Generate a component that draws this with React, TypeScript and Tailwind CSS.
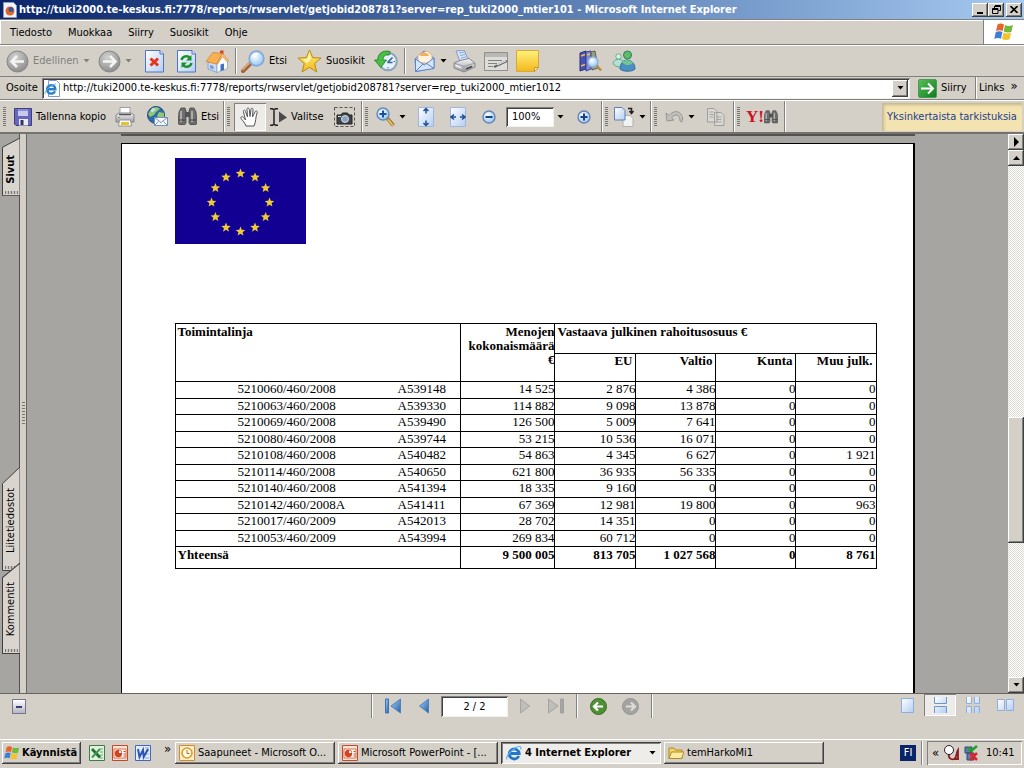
import { useState } from "react";
import type { ReactNode } from "react";

const RAISED = "bg-[#d4d0c8] shadow-[inset_-1px_-1px_#404040,inset_1px_1px_#fff,inset_-2px_-2px_#808080]";
const SUNKEN = "bg-white shadow-[inset_1px_1px_#808080,inset_-1px_-1px_#f4f2ee,inset_2px_2px_#404040]";

const MENU = ["Tiedosto", "Muokkaa", "Siirry", "Suosikit", "Ohje"];

const ROWS = [
  ["5210060/460/2008", "A539148", "14 525", "2 876", "4 386", "0", "0"],
  ["5210063/460/2008", "A539330", "114 882", "9 098", "13 878", "0", "0"],
  ["5210069/460/2008", "A539490", "126 500", "5 009", "7 641", "0", "0"],
  ["5210080/460/2008", "A539744", "53 215", "10 536", "16 071", "0", "0"],
  ["5210108/460/2008", "A540482", "54 863", "4 345", "6 627", "0", "1 921"],
  ["5210114/460/2008", "A540650", "621 800", "36 935", "56 335", "0", "0"],
  ["5210140/460/2008", "A541394", "18 335", "9 160", "0", "0", "0"],
  ["5210142/460/2008A", "A541411", "67 369", "12 981", "19 800", "0", "963"],
  ["5210017/460/2009", "A542013", "28 702", "14 351", "0", "0", "0"],
  ["5210053/460/2009", "A543994", "269 834", "60 712", "0", "0", "0"],
];
const TOTALS = ["9 500 005", "813 705", "1 027 568", "0", "8 761"];

function Svg({ w, h, children }: { w: number; h: number; children: ReactNode }) {
  return (
    <svg width={w} height={h} viewBox={`0 0 ${w} ${h}`} fill="none" className="block shrink-0" aria-hidden="true">
      {children}
    </svg>
  );
}

// Gradients shared by all icons
function Defs() {
  return (
    <svg className="absolute h-0 w-0" aria-hidden="true">
      <defs>
        <radialGradient id="grey" cx="0.4" cy="0.3" r="0.8">
          <stop offset="0" stopColor="#d2d2d0" />
          <stop offset="1" stopColor="#858585" />
        </radialGradient>
        <linearGradient id="sheet" x1="0" y1="0" x2="1" y2="1">
          <stop offset="0" stopColor="#ffffff" />
          <stop offset="1" stopColor="#b4cdf3" />
        </linearGradient>
        <radialGradient id="lens" cx="0.4" cy="0.35" r="0.7">
          <stop offset="0" stopColor="#ffffff" />
          <stop offset="1" stopColor="#8fc3f2" />
        </radialGradient>
        <linearGradient id="gold" x1="0" y1="0" x2="0" y2="1">
          <stop offset="0" stopColor="#fff27a" />
          <stop offset="1" stopColor="#f2b81c" />
        </linearGradient>
        <linearGradient id="nav" x1="0" y1="0" x2="1" y2="1">
          <stop offset="0" stopColor="#a9d2f5" />
          <stop offset="1" stopColor="#235fa8" />
        </linearGradient>
        <linearGradient id="green" x1="0" y1="0" x2="1" y2="1">
          <stop offset="0" stopColor="#58c258" />
          <stop offset="1" stopColor="#0d7a1c" />
        </linearGradient>
        <linearGradient id="metal" x1="0" y1="0" x2="0" y2="1">
          <stop offset="0" stopColor="#f8f8f8" />
          <stop offset="1" stopColor="#9b9ba3" />
        </linearGradient>
      </defs>
    </svg>
  );
}

const RoundArrow = ({ forward = false }) => (
  <Svg w={23} h={23}>
    <circle cx="11.5" cy="11.5" r="10.5" fill="url(#grey)" stroke="#858583" />
    <path
      d={forward ? "M5 11.5h12M12 6l5.5 5.5L12 17" : "M18 11.5H6M11 6l-5.5 5.5L11 17"}
      stroke="#f4f4f2"
      strokeWidth="2.6"
    />
  </Svg>
);

const StopIcon = () => (
  <Svg w={19} h={23}>
    <path d="M.5.5H15l3.5 3.5v18H.5z" fill="url(#sheet)" stroke="#4f74c4" />
    <path d="M15 .5V4h3.500" stroke="#4f74c4" fill="#dce8fb" />
    <path d="M5.500 8.500l7.500 7M13 8.500l-7.500 7" stroke="#e8321a" strokeWidth="3" />
  </Svg>
);

const RefreshIcon = () => (
  <Svg w={19} h={23}>
    <path d="M.5.5H15l3.5 3.5v18H.5z" fill="url(#sheet)" stroke="#4f74c4" />
    <path d="M15 .5V4h3.500" stroke="#4f74c4" fill="#dce8fb" />
    <path d="M4.500 10c1-4 6-5 8.500-2M14.500 13c-1 4-6 5-8.500 2" stroke="#18912b" strokeWidth="2.400" />
    <path d="M14.500 5v5.500H9zM4.500 18v-5.500H10z" fill="#18912b" />
  </Svg>
);

const HomeIcon = () => (
  <Svg w={23} h={23}>
    <path d="M14 .5h3.500V6H14z" fill="#cf4527" />
    <path d="M2 13v6l9 3.500V13L8 7z" fill="#c9daf4" stroke="#7e98c4" strokeWidth=".8" />
    <path d="M11 22.500V12l5.500-7.500L21.500 11v7.500z" fill="#f7faff" stroke="#8ba4cc" strokeWidth=".8" />
    <path d="M0 11.500L7 2.500l9.500 1L10.500 14z" fill="#f8b054" stroke="#d5832b" strokeWidth=".8" />
    <path d="M16.500 3.500l6 7-1 1.500-5-5.500-5 7.500-1 0z" fill="#f8c98c" stroke="#d5832b" strokeWidth=".7" />
    <path d="M4 15l3.500 1v3.500L4 18z" fill="#6f9ddb" />
    <path d="M14.500 14.500l3.500-1V20l-3.500 1.300z" fill="#4271bd" />
  </Svg>
);

const SearchIcon = () => (
  <Svg w={24} h={23}>
    <path d="M2 21l8-8" stroke="#a2633a" strokeWidth="4" strokeLinecap="round" />
    <path d="M1.500 20l7-7" stroke="#e3b183" strokeWidth="1.200" />
    <circle cx="15.500" cy="8.500" r="7.300" fill="url(#lens)" stroke="#83a9d8" strokeWidth="1.700" />
    <path d="M11 7c1-2.500 4-3.500 6-2.500" stroke="#fff" strokeWidth="1.500" />
  </Svg>
);

const StarIcon = () => (
  <Svg w={25} h={24}>
    <path
      d="M12.500 1l3.200 7.600 8.300.5-6.500 5.400 2.300 8.500-7.300-4.700L5 23l2.300-8.500L1 9.100l8.300-.5z"
      fill="url(#gold)"
      stroke="#b98a13"
      strokeLinejoin="round"
    />
    <path d="M12.500 4l1.500 5.500-4 5-4-4 4.500-.5z" fill="#fffbd0" opacity=".8" />
  </Svg>
);

const HistoryIcon = () => (
  <Svg w={24} h={23}>
    <circle cx="14" cy="11.500" r="8.800" fill="#e6f1fb" stroke="#8ea4ba" strokeWidth="2" />
    <path d="M13.500 12.500l5-5M13.500 12.500h5" stroke="#35659e" strokeWidth="1.600" />
    <path d="M14 4.500V6M21 11.500h-1.500M14 18.500V17" stroke="#47709d" />
    <path d="M16 1.500C8-.5 3.500 4.500 3.800 10H.5l6.300 7.500L12.500 10H9c0-3.500 2.500-6 7-5.500z" fill="#4cbd45" stroke="#187b27" strokeWidth=".8" />
  </Svg>
);

const MailIcon = () => (
  <Svg w={22} h={23}>
    <path d="M1 9l9-8 10 7v10L2 21.500z" fill="#a9c9f5" stroke="#5c85c9" />
    <path d="M4 5l9-4 5 4v8H4z" fill="#fff2df" stroke="#dba46c" strokeWidth=".8" />
    <path d="M6 5c2-3 8-3 9 1H6z" fill="#f4ad61" />
    <path d="M1.500 9l9 6L20 8v10.500L1.500 21.500z" fill="#d5e6fc" stroke="#5c85c9" />
    <path d="M1.500 21.500L9 14M20 18.500L12.500 13.500" stroke="#5c85c9" />
  </Svg>
);

const PrinterIcon = () => (
  <Svg w={23} h={23}>
    <path d="M3 1l8-1 4 9-8 2.500z" fill="#d4e6fb" stroke="#7c9cc6" />
    <path d="M6 3l5-1M7 5.500l5-1M8 8l5-1" stroke="#8dabd4" />
    <path d="M1 13l6-2.500 9-2 6 4.500v4l-11 5-10-4z" fill="url(#metal)" stroke="#85868e" />
    <path d="M1 13l10 3.500L22 13M11 16.500V22" stroke="#9a9ba2" />
    <path d="M13 19l6-2.500" stroke="#444" strokeWidth="1.500" />
    <path d="M3 15.500l5 2" stroke="#fff" strokeWidth="1.300" />
  </Svg>
);

const EditIcon = () => (
  <Svg w={24} h={19}>
    <path d="M.5.5h23v18H.5z" fill="#deddda" stroke="#8f8f8d" />
    <path d="M1 1h22v4H1z" fill="#b8b8b5" />
    <path d="M4 8.500h14M4 11.500h9M4 14.500h5" stroke="#82827f" />
    <path d="M23 9l-13 6" stroke="#666" strokeWidth="2" />
    <path d="M22 9l-9 4" stroke="#eee" />
  </Svg>
);

const NoteIcon = () => (
  <Svg w={23} h={22}>
    <path d="M.5.5h22v17l-4 4H.5z" fill="url(#gold)" stroke="#d7a83d" />
    <path d="M18.500 21.500v-4h4z" fill="#fff5ba" stroke="#c9962a" />
  </Svg>
);

const BooksIcon = () => (
  <Svg w={23} h={22}>
    <path d="M1 3l6-2v18l-6 2z" fill="#4b51b0" stroke="#2d3278" />
    <path d="M7 2l5-1v18l-5 2z" fill="#8289d8" stroke="#3f4591" />
    <path d="M2 6l4-1.500M2 16l4-1.500M8 5l3-1" stroke="#e0c15b" strokeWidth="1.500" />
    <path d="M12 2l4-1 3 17-6 2z" fill="#98a082" stroke="#5c604c" />
    <circle cx="14" cy="12" r="5" fill="url(#lens)" stroke="#8fb0d8" strokeWidth="1.400" />
    <path d="M18 16l4 4.500" stroke="#b98a3a" strokeWidth="2.500" />
  </Svg>
);

const MessengerIcon = () => (
  <Svg w={24} h={22}>
    <circle cx="6.500" cy="6.500" r="2.700" fill="#d8f2e0" stroke="#64b093" />
    <path d="M1 13c1-4 7-5 10-2l-2 6c-4 0-7-1-8-4z" fill="#b5e2cf" stroke="#5da98f" />
    <circle cx="15.500" cy="5" r="4" fill="#5dbd69" stroke="#2b7f59" />
    <path d="M8 19c0-5 3-9 7-9s8 3 8 9c-3 3-12 3-15 0z" fill="#4a8fc4" stroke="#336e9d" />
    <path d="M10 12c3 4 7 4 11 1-1-2-4-3-6-3s-4 1-5 2z" fill="#70c590" />
  </Svg>
);

const WindowsFlag = ({ size = 20 }: { size?: number }) => (
  <svg width={size} height={size} viewBox="0 0 20 20" className="block shrink-0" aria-hidden="true">
    <path d="M3.500 2.500c2.500-1.500 4.500-1 6.500 0L8.700 9C6.500 8 4.500 8 2 9.200z" fill="#e8622c" />
    <path d="M11 3c2.500 1.200 5 1.200 8 0l-1.600 6.700c-2.600 1.100-5 1-7.700-.2z" fill="#73b83a" />
    <path d="M1.700 10.300c2.500-1.200 4.500-1.200 6.700-.2L7 16.700c-2.200-1.200-4.500-1-6.700.2z" fill="#3c7fd6" />
    <path d="M9.400 10.600c2.600 1.200 5 1.200 7.800 0l-1.600 6.700c-2.600 1.200-5 1-7.600-.2z" fill="#f4c22f" />
  </svg>
);

const IeIcon = () => (
  <Svg w={16} h={16}>
    <path d="M12.800 11a5 5 0 1 1 .4-2.500H4" stroke="#2277c9" strokeWidth="2.800" />
    <path d="M1 14.500C-1 11 9 1 14 1.500c1.500.5 1 2 .5 3" stroke="#63b2ef" strokeWidth="1.200" />
  </Svg>
);

const PageIeIcon = () => (
  <Svg w={16} h={17}>
    <path d="M4.500.5h8l3 3v13h-11z" fill="#fff" stroke="#7f9cc9" />
    <path d="M11 11.200a4.200 4.200 0 1 1 .4-2H4" stroke="#2a7fcb" strokeWidth="2.400" />
    <path d="M1 14c-1-3 7-10 11-10" stroke="#68b1ea" />
  </Svg>
);

const PowerPointIcon = () => (
  <Svg w={16} h={16}>
    <path d="M.5.5h15v15H.5z" fill="#fbe3d6" stroke="#c2492a" />
    <path d="M2 4h12v9H2z" fill="#fff" stroke="#dd6d44" />
    <circle cx="6.500" cy="8.500" r="3.700" fill="#cf4422" />
    <path d="M7 8V5.500A2.500 2.500 0 0 1 9.500 8z" fill="#fff" />
    <path d="M11.500 6.500h2M11.500 9h2M11.500 11h2" stroke="#c73f1f" />
  </Svg>
);

const ExcelIcon = () => (
  <Svg w={16} h={16}>
    <path d="M.5.5h15v15H.5z" fill="#e2f0e0" stroke="#3a8042" />
    <path d="M11 4h3M11 7h3M11 10h3M11 13h3" stroke="#6dab70" />
    <path d="M3 4l8 8.500" stroke="#1f7030" strokeWidth="2.800" />
    <path d="M11 4l-8 8.500" stroke="#3f9a4d" strokeWidth="2" />
  </Svg>
);

const WordIcon = () => (
  <Svg w={16} h={16}>
    <path d="M.5.5h15v15H.5z" fill="#e3ecfb" stroke="#4169b8" />
    <path d="M10 3h4M11 6h3M11 9h3M10 13h4" stroke="#87a5dc" />
    <path d="M3 4l1.500 8L8 5l.7 7L13 4" stroke="#2a55b2" strokeWidth="2" />
  </Svg>
);

const OutlookIcon = () => (
  <Svg w={16} h={16}>
    <path d="M.5.5h15v15H.5z" fill="#fdf0c9" stroke="#d98b23" />
    <circle cx="8" cy="8" r="5" fill="#fffbe9" stroke="#e0982c" strokeWidth="1.600" />
    <path d="M8 5v3.500h2.500" stroke="#b8671d" />
  </Svg>
);

const FolderIcon = () => (
  <Svg w={16} h={16}>
    <path d="M1 3h5l1.500 2H14v8.500H1z" fill="#f4d263" stroke="#b08a2b" />
    <path d="M3.500 7H16l-2.500 6.500H1z" fill="#ffeb9c" stroke="#b08a2b" />
  </Svg>
);

const FloppyIcon = () => (
  <Svg w={18} h={18}>
    <path d="M.5.5h17v17H2l-1.500-1.500z" fill="#6767bb" stroke="#3d3d83" />
    <path d="M4 1h10v7H4z" fill="#c8c9ed" />
    <path d="M4 1h10v2H4z" fill="#8d8dd2" />
    <path d="M5 11h9v6.500H5z" fill="#ececf2" />
    <path d="M6.500 12h3v5h-3z" fill="#34345f" />
  </Svg>
);

const SmallPrinterIcon = () => (
  <Svg w={20} h={20}>
    <path d="M5 .5h10V9H5z" fill="#fff" stroke="#9f9fa5" />
    <path d="M1 8l3-2h12l3 2v7H1z" fill="url(#metal)" stroke="#85858c" />
    <path d="M4 7.500h12" stroke="#55555a" strokeWidth="1.500" />
    <path d="M4.500 13h11l1 6h-13z" fill="#fff" stroke="#919197" />
    <path d="M6 15h8v3H6z" fill="#e6c22d" />
    <path d="M3 10.500h2" stroke="#62ad4e" />
  </Svg>
);

const GlobeMailIcon = () => (
  <Svg w={21} h={21}>
    <circle cx="9" cy="9" r="8.500" fill="#2c6ba5" stroke="#204f7f" />
    <path d="M5 2l5-1 3 2-4 3-2 3-4 2-2-3zM12 6l5 1v5l-3 2-4-4z" fill="#93c774" />
    <path d="M3 5l3-3 3 1-3 3z" fill="#c3e4ee" />
    <path d="M7.500 11.500h13v8h-13z" fill="#f6f9ff" stroke="#7492be" />
    <path d="M7.500 11.500l6.500 5 6.500-5M7.500 19.500l4-4M20.500 19.500l-4-4" stroke="#7492be" />
  </Svg>
);

const BinocularsIcon = ({ size = 19 }) => (
  <svg width={size} height={size} viewBox="0 0 19 19" fill="none" className="block shrink-0" aria-hidden="true">
    <path d="M3 1h4l1 3v12l-1 1.500H1L0 16l1-11zM12 1h4l2 4 1 11-1 1.500h-6L11 16V4z" fill="#6e6e6e" stroke="#444" strokeWidth=".8" />
    <path d="M7 5h5v5H7z" fill="#535353" />
    <path d="M3 4v11M14 4v11" stroke="#bbb" strokeWidth="1.600" />
    <path d="M1 13h6M12 13h6" stroke="#3e3e3e" />
  </svg>
);

const HandIcon = () => (
  <Svg w={20} h={20}>
    <path
      d="M6 19c-1-3-3-5-5-7.500C0 10 2 9 3.500 10.500L5.500 13 3.500 5C3 3 5 2.500 5.500 4.500L7.500 10 7 2.500C7 .5 9 .5 9.300 2.500L10 9.500l1-7c.3-2 2.300-1.500 2 .5l-.5 7 2.500-5c1-1.800 2.800-1 2 1-1.500 4-1 9-3 13z"
      fill="#fff"
      stroke="#555"
      strokeLinejoin="round"
    />
  </Svg>
);

const SelectIcon = () => (
  <Svg w={17} h={18}>
    <path d="M0 .8h2.500l1.500 1 1.500-1H8M4 2v14M0 17.200h2.500l1.500-1 1.500 1H8" stroke="#222" strokeWidth="1.500" />
    <path d="M9 3.500l8 6-8 5z" fill="#4a4a4a" />
  </Svg>
);

const CameraIcon = () => (
  <Svg w={21} h={20}>
    <path d="M.5.500h20v19H.5z" stroke="#555" strokeDasharray="3 2" />
    <path d="M3 8h4l1.500-2h5L15 8h3v9H3z" fill="#3f4247" stroke="#222" />
    <circle cx="11" cy="12" r="3.500" fill="#86a6c6" stroke="#ddd" />
    <path d="M4 9.500h3" stroke="#ddd" />
  </Svg>
);

const ZoomIcon = () => (
  <Svg w={19} h={20}>
    <path d="M11.500 11.500l6 7" stroke="#a9792c" strokeWidth="3.600" />
    <path d="M12 12.500l5 6" stroke="#efcb71" strokeWidth="1.400" />
    <circle cx="7" cy="7" r="6" fill="url(#lens)" stroke="#5f8bc0" strokeWidth="1.400" />
    <path d="M3.500 7h7M7 3.500v7" stroke="#1d4e9e" strokeWidth="2" />
  </Svg>
);

const FitIcon = ({ across = false }) => (
  <Svg w={16} h={20}>
    <path d="M.5.5h15v19H.5z" fill="url(#sheet)" stroke="#9db8de" />
    {across ? (
      <path d="M1 10h5M15 10h-5M4 7.500L1 10l3 2.500M12 7.500l3 2.500-3 2.500" stroke="#214f92" strokeWidth="1.500" />
    ) : (
      <path d="M8 1.500v5M8 18.500v-5M5.500 4L8 1.500 10.500 4M5.500 16L8 18.500l2.500-2.500" stroke="#214f92" strokeWidth="1.500" />
    )}
  </Svg>
);

const RoundSign = ({ plus = false }) => (
  <Svg w={14} h={14}>
    <circle cx="7" cy="7" r="6" fill="url(#lens)" stroke="#6685b5" strokeWidth="1.400" />
    <path d={plus ? "M3.500 7h7M7 3.500v7" : "M3.500 7h7"} stroke="#173f8c" strokeWidth="2" />
  </Svg>
);

const RotateIcon = () => (
  <Svg w={21} h={20}>
    <path d="M9 8.500h7l3 3v8H9z" fill="#f2f2f0" stroke="#b1b1ae" />
    <path d="M.5.5H8l3 3v9.500H.5z" fill="url(#sheet)" stroke="#5b80b8" />
    <path d="M14 1.500h3.500V6M15.500 4l2 2.500 2-2.500" stroke="#222" strokeWidth="1.500" />
  </Svg>
);

const UndoIcon = () => (
  <Svg w={19} h={16}>
    <path d="M1 4l1 8 7-1-2.500-2.500C10 4.500 15 5 15 12l2 1c3-8-6-15-13-6.500z" fill="#c2c0bb" stroke="#989690" />
  </Svg>
);

const CopyIcon = () => (
  <Svg w={18} h={18}>
    <path d="M.5.5H7l3 3V14H.5zM7.500 4.500H14l3 3v10H7.500z" fill="#d9d8d4" stroke="#a09f9b" />
    <path d="M2.500 4h4M2.500 6.500h4M2.500 9h4M9.500 9h5M9.500 11.500h5M9.500 14h5" stroke="#a6a5a1" />
  </Svg>
);

const GoIcon = () => (
  <Svg w={19} h={19}>
    <rect x=".5" y=".5" width="18" height="18" rx="1.500" fill="url(#green)" stroke="#4b9c52" />
    <path d="M3 9.500h12M10 4.500l5 5-5 5" stroke="#fff" strokeWidth="2" />
  </Svg>
);

const NavArrow = ({ forward = false, edge = false }) => (
  <Svg w={edge ? 16 : 10} h={16}>
    <g transform={forward ? `translate(${edge ? 16 : 10} 0) scale(-1 1)` : undefined}>
      {edge && <path d="M.5 1h3v14h-3z" fill={forward ? "#a5a5a3" : "url(#nav)"} stroke={forward ? "#a0a09e" : "#3d72b4"} />}
      <path
        d={edge ? "M15.500 1v14L6 8z" : "M9.500 1v14L.5 8z"}
        fill={forward ? "#bfbebb" : "url(#nav)"}
        stroke={forward ? "#a4a3a0" : "#4c80bd"}
      />
    </g>
  </Svg>
);

const ViewArrow = ({ forward = false }) => (
  <Svg w={17} h={17}>
    <circle cx="8.500" cy="8.500" r="8" fill={forward ? "#a3a3a1" : "#4f8f35"} stroke={forward ? "#969694" : "#356d22"} />
    <path
      d={forward ? "M4 8.500h8M9 4.500l4 4-4 4" : "M13 8.500H5M8 4.500l-4 4 4 4"}
      stroke={forward ? "#dddcd9" : "#fff"}
      strokeWidth="2.200"
    />
  </Svg>
);

const STAR = Array.from({ length: 10 }, (_, i) => {
  const r = i % 2 ? 2.2 : 5;
  const a = (Math.PI * i) / 5 - Math.PI / 2;
  return `${(r * Math.cos(a)).toFixed(2)},${(r * Math.sin(a)).toFixed(2)}`;
}).join(" ");

function EuFlag() {
  return (
    <svg width="131" height="86" viewBox="0 0 131 86" role="img" aria-label="EU" className="block">
      <rect width="131" height="86" fill="#120092" />
      {Array.from({ length: 12 }, (_, i) => {
        const a = (Math.PI * i) / 6;
        return (
          <polygon
            key={i}
            points={STAR}
            fill="#f0cb38"
            transform={`translate(${65.5 + 29 * Math.sin(a)} ${44.5 - 29 * Math.cos(a)})`}
          />
        );
      })}
    </svg>
  );
}

function Tool({ label, children, className = "" }: { label: string; children: ReactNode; className?: string }) {
  return (
    <button type="button" aria-label={label} className={`flex shrink-0 items-center gap-1 ${className}`}>
      {children}
    </button>
  );
}

const Caret = ({ color = "#000" }) => (
  <Svg w={7} h={4}>
    <path d="M.5 0h6L3.500 3.500z" fill={color} />
  </Svg>
);

const Sep = () => <div className="w-[2px] shrink-0 self-stretch border-l border-[#808080] bg-white" />;

const Grip = () => (
  <div className="h-5 w-[3px] shrink-0 bg-[repeating-linear-gradient(#77756f_0_1px,#d4d0c8_1px_2px)]" />
);

function TitleBar() {
  return (
    <header className="flex h-[19px] shrink-0 items-center bg-linear-to-r from-[#0a246a] to-[#a6caf0] pr-[2px] pl-[3px]">
      <Svg w={14} h={16}>
        <path d="M.5.500h10l3 3v12H.5z" fill="#f1f4fb" stroke="#8a9cc4" />
        <circle cx="7" cy="9" r="4.500" fill="#e0672a" />
        <circle cx="8" cy="7.500" r="2.500" fill="#34589f" />
      </Svg>
      <h1 className="ml-[2px] grow truncate text-[11px] font-bold text-white">
        http://tuki2000.te-keskus.fi:7778/reports/rwservlet/getjobid208781?server=rep_tuki2000_mtier101 - Microsoft Internet
        Explorer
      </h1>
      <button type="button" aria-label="Pienennä" className={`flex h-[14px] w-4 items-end justify-center pb-[3px] ${RAISED}`}>
        <span className="h-[2px] w-[6px] bg-black" />
      </button>
      <button type="button" aria-label="Palauta" className={`flex h-[14px] w-4 items-center justify-center ${RAISED}`}>
        <Svg w={9} h={9}>
          <path d="M3 .500h5.500V5.500H6.500M2.500 3V1M3 1.500h5" stroke="#000" />
          <path d="M.5 3.500h5.500v5H.5zM.5 4.500H6" stroke="#000" />
        </Svg>
      </button>
      <button type="button" aria-label="Sulje" className={`ml-[2px] flex h-[14px] w-4 items-center justify-center ${RAISED}`}>
        <Svg w={8} h={7}>
          <path d="M.5 0l7 7M7.500 0l-7 7" stroke="#000" strokeWidth="1.600" />
        </Svg>
      </button>
    </header>
  );
}

function MenuBar() {
  return (
    <div className="flex h-[26px] shrink-0 items-stretch border-t border-b border-t-[#808080] border-b-[#808080]">
      <nav className="flex grow items-center gap-4 border-t border-l border-white pl-[9px]">
        {MENU.map((m) => (
          <button key={m} type="button">
            {m}
          </button>
        ))}
      </nav>
      <div className="flex w-[41px] items-center justify-center border-l border-[#808080] bg-white">
        <WindowsFlag />
      </div>
    </div>
  );
}

function BrowserToolbar() {
  return (
    <div className="flex h-8 shrink-0 items-center border-b border-t border-t-white border-b-[#808080] py-[2px] pl-[6px]">
      <Tool label="Edellinen" className="text-[#808080]">
        <RoundArrow />
        <span className="w-[46px] text-left">Edellinen</span>
        <Caret color="#808080" />
      </Tool>
      <Tool label="Seuraava" className="ml-2">
        <RoundArrow forward />
        <Caret color="#808080" />
      </Tool>
      <Tool label="Pysäytä" className="ml-[13px]"><StopIcon /></Tool>
      <Tool label="Päivitä" className="ml-[13px]"><RefreshIcon /></Tool>
      <Tool label="Koti" className="ml-[10px]"><HomeIcon /></Tool>
      <div className="ml-[6px] flex self-stretch"><Sep /></div>
      <Tool label="Etsi" className="ml-1"><SearchIcon /><span className="w-[20px] text-left">Etsi</span></Tool>
      <Tool label="Suosikit" className="ml-2"><StarIcon /><span className="w-[40px] text-left">Suosikit</span></Tool>
      <Tool label="Sivuhistoria" className="ml-2"><HistoryIcon /></Tool>
      <div className="ml-[6px] flex self-stretch"><Sep /></div>
      <Tool label="Posti" className="ml-2"><MailIcon /><Caret /></Tool>
      <Tool label="Tulosta" className="ml-[6px]"><PrinterIcon /></Tool>
      <Tool label="Muokkaa" className="ml-2"><EditIcon /></Tool>
      <Tool label="Keskustele" className="ml-2"><NoteIcon /></Tool>
      <Tool label="Lähdetiedot" className="ml-10"><BooksIcon /></Tool>
      <Tool label="Messenger" className="ml-[10px]"><MessengerIcon /></Tool>
    </div>
  );
}

function AddressBar() {
  return (
    <div className="flex h-[23px] shrink-0 items-center border-b border-[#808080] pl-[6px]">
      <label htmlFor="address" className="w-9 shrink-0">
        Osoite
      </label>
      <div className={`flex h-[21px] min-w-0 grow items-center gap-[3px] p-[2px] ${SUNKEN}`}>
        <PageIeIcon />
        <input
          id="address"
          className="min-w-0 grow bg-transparent outline-none"
          defaultValue="http://tuki2000.te-keskus.fi:7778/reports/rwservlet/getjobid208781?server=rep_tuki2000_mtier1012"
        />
        <button type="button" aria-label="Avaa luettelo" className={`flex h-[17px] w-4 items-center justify-center ${RAISED}`}>
          <Caret />
        </button>
      </div>
      <Tool label="Siirry" className="ml-2"><GoIcon /><span className="w-[34px] text-left">Siirry</span></Tool>
      <Sep />
      <button type="button" className="ml-[2px] w-[30px] text-left">Links</button>
      <button type="button" aria-label="Lisää linkkejä" className="mr-[5px] mb-1 w-[10px] text-[13px]">»</button>
    </div>
  );
}

function AcrobatToolbar({ zoom, setZoom }: { zoom: string; setZoom: (z: string) => void }) {
  return (
    <div className="flex h-[34px] shrink-0 items-center border-t border-b-2 border-t-white border-b-[#75736e] pl-[3px]">
      <Grip />
      <Tool label="Tallenna kopio" className="ml-2"><FloppyIcon /><span className="w-[76px] text-left">Tallenna kopio</span></Tool>
      <Tool label="Tulosta" className="ml-[3px]"><SmallPrinterIcon /></Tool>
      <Tool label="Sähköposti" className="ml-3"><GlobeMailIcon /></Tool>
      <Tool label="Etsi" className="ml-[10px]"><BinocularsIcon /><span className="w-[22px] text-left">Etsi</span></Tool>
      <Sep />
      <div className="w-[2px]" />
      <Grip />
      <Tool
        label="Käsityökalu"
        className="ml-1 h-7 w-8 justify-center bg-[#eeece8] shadow-[inset_1px_1px_#808080,inset_-1px_-1px_#fff]"
      >
        <HandIcon />
      </Tool>
      <Tool label="Valitse" className="ml-1"><SelectIcon /><span className="w-[40px] text-left">Valitse</span></Tool>
      <Tool label="Tilannekuva" className="ml-[3px]"><CameraIcon /></Tool>
      <div className="w-[6px]" />
      <Sep />
      <div className="w-[2px]" />
      <Grip />
      <Tool label="Lähennä" className="ml-2"><ZoomIcon /><Caret /></Tool>
      <Tool label="Sovita sivu" className="ml-3"><FitIcon /></Tool>
      <Tool label="Sovita leveys" className="ml-4"><FitIcon across /></Tool>
      <Tool label="Loitonna" className="ml-4"><RoundSign /></Tool>
      <input
        aria-label="Suurennus"
        value={zoom}
        onChange={(e) => setZoom(e.target.value)}
        className={`ml-[10px] h-5 w-12 shrink-0 px-[6px] outline-none ${SUNKEN}`}
      />
      <Tool label="Valitse suurennus" className="ml-[3px]"><Caret /></Tool>
      <Tool label="Suurenna" className="ml-[13px]"><RoundSign plus /></Tool>
      <div className="w-[10px]" />
      <Sep />
      <div className="w-[2px]" />
      <Grip />
      <Tool label="Kierrä" className="ml-[6px]"><RotateIcon /><Caret /></Tool>
      <div className="w-1" />
      <Sep />
      <div className="w-[2px]" />
      <Grip />
      <Tool label="Kumoa" className="ml-2"><UndoIcon /><Caret /></Tool>
      <Tool label="Kopioi" className="ml-3"><CopyIcon /></Tool>
      <div className="w-2" />
      <Sep />
      <div className="w-[2px]" />
      <Grip />
      <button type="button" className="mx-[6px] flex items-center font-['Liberation_Serif',serif] text-[17px] font-bold text-[#cf1126]">
        Y!
        <BinocularsIcon size={14} />
      </button>
      <Sep />
      <div className="grow" />
      <a
        href="#tarkistukset"
        className="mr-[2px] flex h-7 w-[140px] shrink-0 items-center justify-center bg-[#f3e3b1] whitespace-nowrap text-[#24408e] shadow-[inset_2px_2px_3px_#c5b88d]"
      >
        Yksinkertaista tarkistuksia
      </a>
    </div>
  );
}

function SideTab({ label, className = "" }: { label: string; className?: string }) {
  return (
    <button type="button" className={`relative ml-[2px] flex w-[18px] justify-center ${className}`}>
      <svg className="absolute inset-0 h-full w-full" viewBox="0 0 18 100" preserveAspectRatio="none" aria-hidden="true">
        <path d="M.5 99.500V16L18 0v99.500z" fill="#d9d5ce" stroke="#404040" vectorEffect="non-scaling-stroke" />
      </svg>
      <span className="absolute right-[2px] bottom-[2px] left-[3px] h-[3px] bg-[repeating-linear-gradient(90deg,#777_0_1px,#c8c4bc_1px_3px)]" />
      <span className="relative rotate-180 leading-4 [writing-mode:vertical-rl]">{label}</span>
    </button>
  );
}

function Sidebar() {
  return (
    <aside className="flex shrink-0">
      <div className="flex w-5 flex-col border-r border-[#55534f] bg-[#a6a5a1] pt-1 pb-[39px]">
        <SideTab label="Sivut" className="h-[58px] items-end pb-3 font-bold" />
        <div className="grow" />
        <SideTab label="Liitetiedostot" className="h-[104px] items-end pb-[18px]" />
        <SideTab label="Kommentit" className="-mt-2 h-[91px] items-end pb-[18px]" />
      </div>
      <div className="flex w-[7px] items-center justify-center border-r border-[#66645f] bg-[#d4d0c8]">
        <div className="h-6 w-[3px] bg-[repeating-linear-gradient(#77756f_0_1px,#d4d0c8_1px_3px)]" />
      </div>
    </aside>
  );
}

function ReportTable() {
  return (
    <table className="w-[702px] table-fixed border-collapse font-['Liberation_Serif',serif] text-[13px] leading-[14px] [&_td]:border [&_td]:border-black [&_th]:border [&_th]:border-black">
      <colgroup>
        <col />
        <col className="w-[94px]" />
        <col className="w-[81px]" />
        <col className="w-[80px]" />
        <col className="w-[80px]" />
        <col className="w-[80px]" />
      </colgroup>
      <thead className="align-top">
        <tr className="h-[30px]">
          <th rowSpan={2} className="px-[2px] pt-[1px] text-left">Toimintalinja</th>
          <th rowSpan={2} className="pt-[1px] text-right">
            Menojen kokonaismäärä €
          </th>
          <th colSpan={4} className="px-[2px] pt-[1px] text-left">Vastaava julkinen rahoitusosuus €</th>
        </tr>
        <tr className="h-7">
          {["EU", "Valtio", "Kunta", "Muu julk."].map((h) => (
            <th key={h} className="pr-[3px] text-right">{h}</th>
          ))}
        </tr>
      </thead>
      <tbody className="text-right align-top">
        {ROWS.map(([code, id, ...sums]) => (
          <tr key={id} className="odd:h-[17px] even:h-4">
            <td className="p-0">
              <div className="flex pl-[62px] text-left">
                <span className="w-40">{code}</span>
                <span>{id}</span>
              </div>
            </td>
            {sums.map((s, i) => (
              <td key={i} className="p-0">{s}</td>
            ))}
          </tr>
        ))}
      </tbody>
      <tfoot className="align-top font-bold">
        <tr className="h-[22px]">
          <th className="px-[2px] pt-[1px] text-left">Yhteensä</th>
          {TOTALS.map((t, i) => (
            <td key={i} className="p-0 pt-[1px] text-right">{t}</td>
          ))}
        </tr>
      </tfoot>
    </table>
  );
}

function ScrollBar() {
  return (
    <div className="flex w-4 shrink-0 flex-col bg-[repeating-conic-gradient(#fff_0_25%,#dedbd5_0_50%)] bg-[length:2px_2px]">
      <button type="button" aria-label="Näytä valikko" className={`flex h-4 shrink-0 items-center justify-center ${RAISED}`}>
        <Svg w={5} h={10}><path d="M0 0l5 5-5 5z" fill="#000" /></Svg>
      </button>
      <button type="button" aria-label="Ylös" className={`flex h-4 shrink-0 items-center justify-center ${RAISED}`}>
        <Svg w={7} h={4}><path d="M0 4h7L3.500 0z" fill="#000" /></Svg>
      </button>
      <div className="grow-[252]" />
      <div className={`h-[126px] ${RAISED}`} />
      <div className="grow-[134]" />
      <button type="button" aria-label="Alas" className={`flex h-4 shrink-0 items-center justify-center ${RAISED}`}>
        <Caret />
      </button>
    </div>
  );
}

function StatusBar() {
  return (
    <div className="grid h-[46px] shrink-0 grid-cols-[1fr_auto_1fr] items-start border-t border-[#66645f]">
      <button
        type="button"
        aria-label="Piilota"
        className="mt-[5px] ml-3 flex h-[15px] w-[14px] items-center justify-center border border-[#77778a] bg-linear-to-b from-[#ffffff] to-[#b5b5c5]"
      >
        <span className="h-[2px] w-[6px] bg-[#3f3f66]" />
      </button>
      <div className="flex h-6 items-center">
        <Sep />
        <Tool label="Ensimmäinen sivu" className="ml-3"><NavArrow edge /></Tool>
        <Tool label="Edellinen sivu" className="ml-[18px]"><NavArrow /></Tool>
        <input
          aria-label="Sivu"
          defaultValue="2 / 2"
          className={`ml-3 h-[21px] w-[67px] text-center outline-none ${SUNKEN}`}
        />
        <Tool label="Seuraava sivu" className="ml-3"><NavArrow forward /></Tool>
        <Tool label="Viimeinen sivu" className="ml-[18px]"><NavArrow edge forward /></Tool>
        <div className="w-3" />
        <Sep />
        <Tool label="Edellinen näkymä" className="ml-3"><ViewArrow /></Tool>
        <Tool label="Seuraava näkymä" className="ml-[15px]"><ViewArrow forward /></Tool>
        <div className="w-3" />
        <Sep />
      </div>
      <div className="flex items-center justify-end gap-[10px] pr-[10px]">
        <Tool label="Yksi sivu">
          <Svg w={13} h={15}><path d="M.5.5h12v14H.5z" fill="url(#sheet)" stroke="#8eaede" /></Svg>
        </Tool>
        <Tool label="Jatkuva" className="h-[22px] w-8 justify-center bg-[#eeece8] shadow-[inset_1px_1px_#808080,inset_-1px_-1px_#fff]">
          <Svg w={13} h={16}>
            <path d="M.5 0v6.500h12V0M.5 16V9.500h12V16" fill="url(#sheet)" stroke="#6f96cc" />
          </Svg>
        </Tool>
        <Tool label="Jatkuva, aukeamat" className="w-[21px]">
          <Svg w={14} h={16}>
            <path d="M.5 0v6.500h5V0M8.500 0v6.500h5V0M.5 16V9.500h5V16M8.500 16V9.500h5V16" fill="url(#sheet)" stroke="#8eaede" />
          </Svg>
        </Tool>
        <Tool label="Aukeamat">
          <Svg w={17} h={12}><path d="M.5.5h7v11h-7zM9.500.5h7v11h-7z" fill="url(#sheet)" stroke="#8eaede" /></Svg>
        </Tool>
      </div>
    </div>
  );
}

function Task({ icon, children }: { icon: ReactNode; children: string }) {
  return (
    <button type="button" className={`flex h-[22px] w-40 min-w-0 items-center gap-[3px] px-1 ${RAISED}`}>
      {icon}
      <span className="truncate">{children}</span>
    </button>
  );
}

function TaskBar() {
  return (
    <footer className="flex h-[29px] shrink-0 items-center border-t border-white pr-[2px] pb-[2px] pl-[2px]">
      <button type="button" className={`flex h-[22px] w-[79px] shrink-0 items-center gap-[2px] pl-[2px] font-bold ${RAISED}`}>
        <WindowsFlag size={16} />
        Käynnistä
      </button>
      <div className="ml-2 flex shrink-0 items-center gap-[7px]">
        <Tool label="Excel"><ExcelIcon /></Tool>
        <Tool label="PowerPoint"><PowerPointIcon /></Tool>
        <Tool label="Word"><WordIcon /></Tool>
      </div>
      <button type="button" aria-label="Lisää" className="mb-2 ml-[9px] w-[15px] shrink-0 text-[13px]">»</button>
      <div className="flex min-w-0 grow gap-[3px]">
        <Task icon={<OutlookIcon />}>Saapuneet - Microsoft O...</Task>
        <Task icon={<PowerPointIcon />}>Microsoft PowerPoint - [...</Task>
        <button
          type="button"
          className="flex h-[22px] w-40 min-w-0 items-center gap-[3px] bg-[#efede9] px-[5px] font-bold shadow-[inset_1px_1px_#404040,inset_-1px_-1px_#fff,inset_2px_2px_#808080]"
        >
          <IeIcon />
          <span className="grow truncate text-left">4 Internet Explorer</span>
          <Caret />
        </button>
        <Task icon={<FolderIcon />}>temHarkoMi1</Task>
      </div>
      <div className="flex h-4 w-4 shrink-0 items-center justify-center bg-[#0a246a] text-white">FI</div>
      <div className="ml-[5px] flex h-6 shrink-0"><Sep /></div>
      <div className="ml-1 flex h-6 w-[95px] shrink-0 items-center gap-1 pl-1 shadow-[inset_1px_1px_#808080,inset_-1px_-1px_#fff]">
        <button type="button" aria-label="Näytä kuvakkeet" className="w-[9px] text-[13px]">«</button>
        <Svg w={16} h={16}>
          <path d="M5 9c-1 4 2 6 5 5s2-6 4-9v10M10 14h5" stroke="#8f1b1b" strokeWidth="1.800" />
          <circle cx="5" cy="5" r="4.500" fill="#fff" stroke="#222" />
        </Svg>
        <Svg w={15} h={16}>
          <path d="M1 2h7v6H1zM3 8h7v7H3z" fill="#5b7cae" stroke="#33496e" />
          <path d="M4 3l3 3 6-5" stroke="#1ea22b" strokeWidth="2.500" />
          <path d="M6 8l7 7M13 8l-7 7" stroke="#e3222a" strokeWidth="2.500" />
        </Svg>
        <time className="ml-[3px]">10:41</time>
      </div>
    </footer>
  );
}

export default function App() {
  const [zoom, setZoom] = useState("100%");

  return (
    <div className="flex h-screen flex-col overflow-hidden bg-[#d4d0c8] font-['DejaVu_Sans_Condensed','Noto_Sans',sans-serif] text-[11px] leading-[14px] text-black">
      <Defs />
      <TitleBar />
      <MenuBar />
      <BrowserToolbar />
      <AddressBar />
      <AcrobatToolbar zoom={zoom} setZoom={setZoom} />
      <div className="flex min-h-0 grow">
        <Sidebar />
        <main className="flex min-w-0 grow flex-col items-center overflow-hidden bg-[#a6a5a1]">
          <div className="h-[2px] w-[794px] shrink-0 bg-[#55534f]" />
          <article className="mt-[7px] w-[794px] grow border-t border-r-2 border-l border-black bg-white pt-[14px] pl-[53px]">
            <EuFlag />
            <div className="mt-[79px]">
              <ReportTable />
            </div>
          </article>
        </main>
        <ScrollBar />
      </div>
      <StatusBar />
      <TaskBar />
    </div>
  );
}
